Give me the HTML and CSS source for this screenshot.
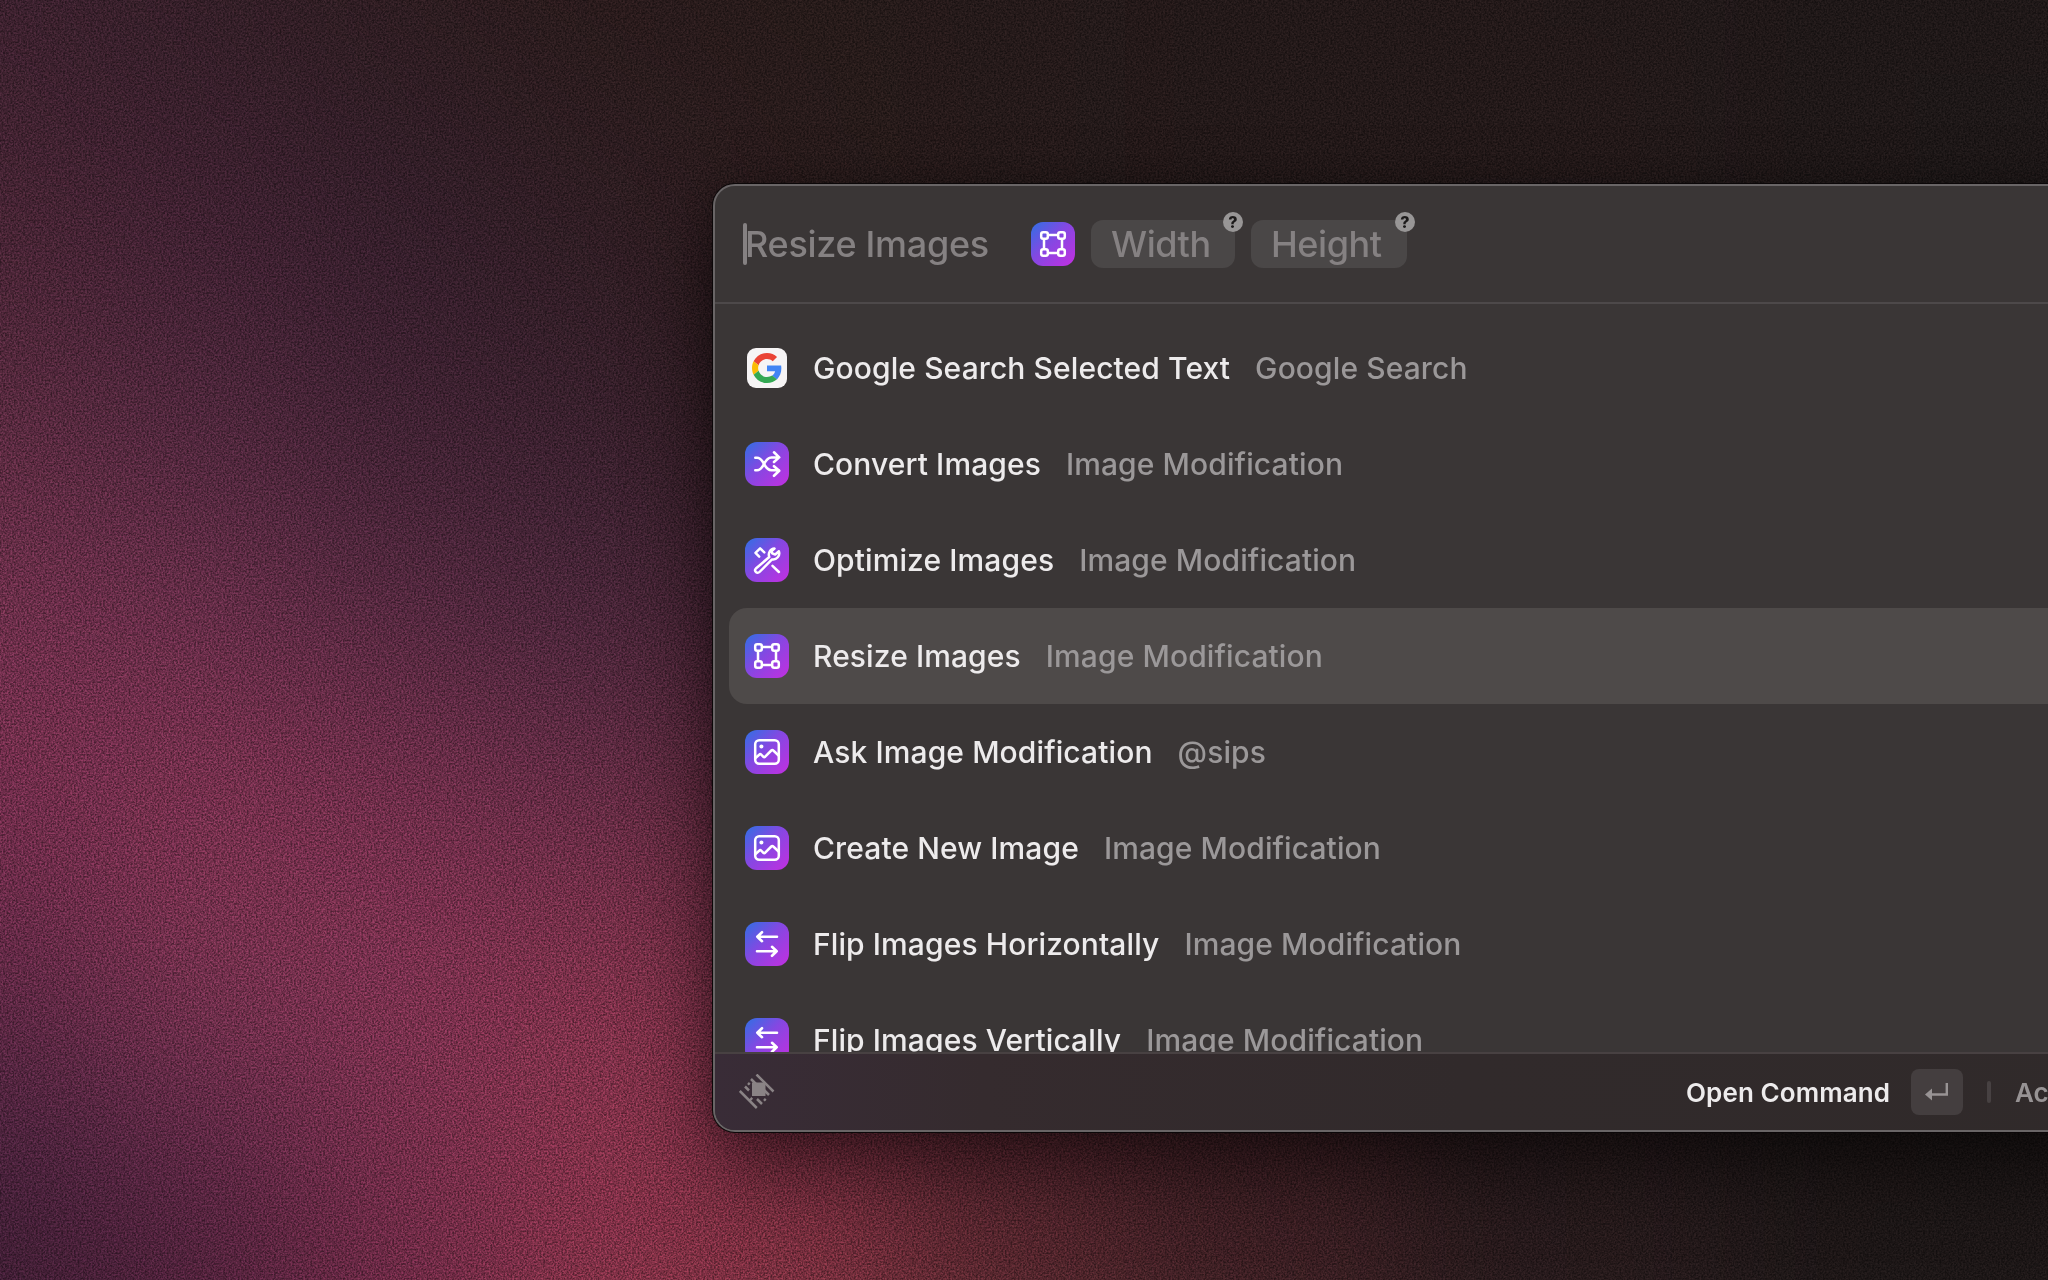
FILE: index.html
```html
<!DOCTYPE html>
<html lang="en">
<head>
<meta charset="utf-8">
<title>Command Launcher</title>
<link rel="stylesheet" href="styles.css">
</head>
<body>
<svg class="defs" width="0" height="0" aria-hidden="true">
  <defs>
    <symbol id="resize" viewBox="0 0 44 44"><g fill="none" stroke="#fff" stroke-width="2.5"><rect x="10.2" y="10.2" width="6.6" height="6.6" rx="2"/><rect x="27.2" y="10.2" width="6.6" height="6.6" rx="2"/><rect x="10.2" y="27.2" width="6.6" height="6.6" rx="2"/><rect x="27.2" y="27.2" width="6.6" height="6.6" rx="2"/><path d="M17 13h10M17 31h10M13 17v10M31 17v10"/></g></symbol>
    <symbol id="shuffle" viewBox="0 0 44 44"><path fill="none" stroke="#fff" stroke-width="2.6" stroke-linecap="round" stroke-linejoin="round" d="M10.300 15.800h1.700c7.500 0 6.500 12.500 14.500 12.500h7.500M10.300 28.300h1.700c7.500 0 6.500-12.800 14.500-12.800h7.500M29 10.300l5.200 5.100-5.200 4.600M29 24.200l5.200 4.600-5.200 5"/></symbol>
    <symbol id="tools" viewBox="0 0 44 44"><g fill="none" stroke="#fff" stroke-width="2.500" stroke-linecap="round" stroke-linejoin="round"><path d="M29.500 10.500a6.200 6.200 0 0 0-5.200 8.500L10.900 30.500a2.500 2.500 0 0 0 3.600 3.500L27 21.400a6.200 6.200 0 0 0 6.900-8.100l-3.700 3.200-3-1.200-.8-2.100z"/><path d="M14.200 18.600l-3.700-3.800 4.600-4.500 4.200 4M27.500 27.800l6.400 6.200"/></g></symbol>
    <symbol id="image" viewBox="0 0 44 44"><g fill="none" stroke="#fff" stroke-width="2.500" stroke-linecap="round" stroke-linejoin="round"><rect x="10.200" y="10.200" width="23.600" height="23.600" rx="4"/><path d="M10.500 28l3.700-3.300q1-1 2 0l2 2q1 .8 2 0l6.100-6.200q1-1 2 0l5.300 5"/></g><circle cx="16.400" cy="16.400" r="2" fill="#fff"/></symbol>
    <symbol id="swap" viewBox="0 0 44 44"><path fill="none" stroke="#fff" stroke-width="2.600" stroke-linecap="round" stroke-linejoin="round" d="M32 14.700H12.300M17 10.200l-4.700 4.500 4.700 4.500M12 29.300h19.700M27 24.800l4.700 4.500-4.700 4.500"/></symbol>
  </defs>
</svg>
<main class="desktop">
  <div class="wallpaper" aria-hidden="true"><i class="w1"></i><i class="w2"></i><i class="w3"></i><i class="w4"></i><i class="w5"></i><i class="w6"></i><i class="w7"></i><i class="w8"></i><i class="w9"></i></div>
  <section class="launcher">
    <header class="search">
      <span class="caret"></span><span class="query">Resize Images</span>
      <span class="tile"><svg><use href="#resize"/></svg></span>
      <span class="arg width">Width<b class="help">?</b></span>
      <span class="arg height">Height<b class="help">?</b></span>
    </header>
    <div class="results">
      <div class="row"><span class="slot"><span class="google"><svg viewBox="0 0 48 48"><path fill="#EA4335" d="M24 9.500c3.540 0 6.710 1.220 9.210 3.600l6.850-6.850C35.900 2.380 30.470 0 24 0 14.620 0 6.510 5.380 2.560 13.220l7.980 6.190C12.430 13.720 17.740 9.500 24 9.500z"/><path fill="#4285F4" d="M46.980 24.550c0-1.570-.15-3.090-.38-4.550H24v9.020h12.940c-.58 2.960-2.260 5.480-4.780 7.180l7.730 6c4.510-4.180 7.090-10.360 7.090-17.650z"/><path fill="#FBBC05" d="M10.530 28.590c-.48-1.450-.76-2.990-.76-4.590s.27-3.140.76-4.590l-7.980-6.190C.92 16.460 0 20.120 0 24s.92 7.540 2.560 10.780l7.970-6.190z"/><path fill="#34A853" d="M24 48c6.480 0 11.930-2.130 15.890-5.810l-7.730-6c-2.150 1.450-4.920 2.300-8.160 2.300-6.260 0-11.570-4.220-13.470-9.910l-7.980 6.190C6.510 42.620 14.620 48 24 48z"/></svg></span></span><span class="title">Google Search Selected Text</span><span class="sub">Google Search</span></div>
      <div class="row"><span class="tile"><svg><use href="#shuffle"/></svg></span><span class="title">Convert Images</span><span class="sub">Image Modification</span></div>
      <div class="row"><span class="tile"><svg><use href="#tools"/></svg></span><span class="title">Optimize Images</span><span class="sub">Image Modification</span></div>
      <div class="row selected"><span class="tile"><svg><use href="#resize"/></svg></span><span class="title">Resize Images</span><span class="sub">Image Modification</span></div>
      <div class="row"><span class="tile"><svg><use href="#image"/></svg></span><span class="title">Ask Image Modification</span><span class="sub">@sips</span></div>
      <div class="row"><span class="tile"><svg><use href="#image"/></svg></span><span class="title">Create New Image</span><span class="sub">Image Modification</span></div>
      <div class="row"><span class="tile"><svg><use href="#swap"/></svg></span><span class="title">Flip Images Horizontally</span><span class="sub">Image Modification</span></div>
      <div class="row"><span class="tile"><svg><use href="#swap"/></svg></span><span class="title">Flip Images Vertically</span><span class="sub">Image Modification</span></div>
    </div>
    <footer class="bar">
      <svg class="logo" viewBox="0 0 36 36"><path fill="#8a8385" d="M13 8.500h13.500v13.500H13z"/><path fill="none" stroke="#8a8385" stroke-width="2.500" d="M17.500.5l17 17M12 5l5 5M25 16l5 5M.8 17l17 17M6 12.500l4 4M18 25l5 5M9 9l1.700 1.700M11.500 24l1.700 1.700M25 25l1.700 1.700"/></svg>
      <span class="primary">Open Command</span>
      <span class="key"><svg viewBox="0 0 24 20"><path fill="none" stroke="#989394" stroke-width="2.400" d="M21.800 1v11.500H6"/><path fill="#989394" d="M0 12.500L7 6.500v12z"/></svg></span>
      <span class="divider"></span>
      <span class="actions">Actions</span>
    </footer>
  </section>
  <svg class="grain" aria-hidden="true"><filter id="noise" x="0" y="0" width="100%" height="100%" color-interpolation-filters="sRGB"><feTurbulence type="fractalNoise" baseFrequency="0.55" numOctaves="2" seed="4"/><feColorMatrix values="2 0 0 0 -.48  2 0 0 0 -.48  2 0 0 0 -.48  0 0 0 0 1"/></filter><rect width="100%" height="100%" filter="url(#noise)"/></svg>
</main>
</body>
</html>
```
FILE: styles.css
```css
* { box-sizing: border-box; }
body { margin: 0; font-family: Inter, "Liberation Sans", sans-serif; }
.defs { position: absolute; }
.desktop {
  position: relative;
  isolation: isolate;
  width: 2048px;
  height: 1280px;
  padding: 184px 0 0 713px;
  overflow: hidden;
  background: #1e1515;
}
/* Vertical colour strips, blurred together into the wallpaper */
.wallpaper {
  position: absolute;
  z-index: -2;
  inset: 0 -300px 0 -300px;
  display: grid;
  grid-template-columns: 400px 200px 200px 200px 200px 225px 275px 325px 1fr;
  filter: blur(75px);
}
.wallpaper i { margin: -200px 0; }
.w1 { background: linear-gradient(#3a202d 200px, #432231 400px, #54283c 600px, #6b2e49 800px, #702c4a 1000px, #5a2641 1200px, #45213a 1350px, #3c1c31 1480px); }
.w2 { background: linear-gradient(#321e26 200px, #3c1f2f 400px, #4a2539 600px, #622c46 800px, #772f4c 1000px, #70304b 1200px, #572541 1350px, #4c2038 1480px); }
.w3 { background: linear-gradient(#2c1c1f 200px, #321d29 400px, #3c2030 600px, #50273d 800px, #6f2d49 1000px, #7a304e 1200px, #702d48 1350px, #682742 1480px); }
.w4 { background: linear-gradient(#281a1a 200px, #2d1c21 400px, #351e2a 600px, #442437 800px, #632b44 1000px, #7d3048 1200px, #823149 1350px, #7e2f44 1480px); }
.w5 { background: linear-gradient(#261a19 200px, #291a1b 600px, #371e28 800px, #722e42 1200px, #772d3f 1350px, #772e3c 1480px); }
.w6 { background: linear-gradient(#241919 200px, #241919 600px, #50232d 1200px, #53252c 1480px); }
.w7 { background: linear-gradient(#221818 200px, #221818 600px, #371c21 1200px, #3b1e22 1480px); }
.w8 { background: linear-gradient(#211818, #26191b); }
.w9 { background: linear-gradient(#1e1717, #1c1616); }
.grain { position: absolute; z-index: -1; inset: 0; width: 100%; height: 100%; opacity: .34; mix-blend-mode: overlay; }
.launcher {
  position: relative;
  width: 1500px;
  height: 948px;
  display: flex;
  flex-direction: column;
  border: 2px solid #696566;
  border-radius: 22px;
  background: #3a3636;
  box-shadow: 0 0 0 1px #0b0708, 0 36px 80px rgba(0,0,0,.5), 0 0 30px rgba(0,0,0,.2);
  overflow: hidden;
}
.search {
  flex: 0 0 118px;
  display: flex;
  align-items: center;
  padding-left: 28px;
  border-bottom: 2px solid #4d494a;
  color: #858182;
  font-size: 36px;
  font-weight: 500;
  letter-spacing: -.3px;
}
.caret { width: 4px; height: 42px; border-radius: 2px; background: #858182; }
.query { width: 286px; margin-left: -2px; }
.tile {
  flex: none;
  width: 44px;
  height: 44px;
  border-radius: 12px;
  background: linear-gradient(135deg, #2f70e4, #8448e2 45%, #c32fe0);
}
.tile svg { display: block; width: 44px; height: 44px; }
.arg {
  position: relative;
  height: 48px;
  margin-left: 16px;
  padding-left: 20px;
  border-radius: 12px;
  background: #4a4747;
  letter-spacing: -.45px;
  line-height: 48px;
}
.arg.width { width: 144px; }
.arg.height { width: 156px; }
.help {
  position: absolute;
  top: -8px;
  right: -8px;
  width: 20px;
  height: 20px;
  border-radius: 50%;
  background: #989696;
  color: #1c1a1a;
  font-size: 16px;
  font-weight: 800;
  letter-spacing: 0;
  line-height: 20px;
  text-align: center;
}
.results { flex: 1; min-height: 0; overflow: hidden; padding: 16px 14px 0; }
.row {
  height: 96px;
  display: flex;
  align-items: center;
  padding-left: 16px;
  border-radius: 18px;
  font-size: 30px;
  font-weight: 500;
  letter-spacing: .1px;
  white-space: nowrap;
}
.selected { background: #4e4a49; }
.slot { display: flex; width: 44px; justify-content: center; }
.google { display: flex; width: 40px; height: 40px; align-items: center; justify-content: center; border-radius: 9px; background: #f6f4f5; }
.google svg { width: 30px; height: 30px; }
.title { margin-left: 24px; color: #edebec; }
.sub { margin-left: 25px; color: #9b9899; }
.bar {
  flex: 0 0 78px;
  display: flex;
  align-items: center;
  padding-left: 24px;
  border-top: 2px solid #484142;
  background: linear-gradient(90deg, #392c37, #352b2e 18%, #312a2b 50%, #302a2a);
  font-size: 26px;
  font-weight: 600;
  letter-spacing: .1px;
}
.logo { width: 36px; height: 36px; }
.primary { width: 225px; margin-left: 911px; color: #edebec; white-space: nowrap; }
.key { display: flex; width: 52px; height: 46px; align-items: center; justify-content: center; border-radius: 8px; background: #443e3f; }
.key svg { width: 24px; height: 20px; }
.divider { width: 4px; height: 22px; margin-left: 24px; border-radius: 2px; background: #474142; }
.actions { margin-left: 24px; color: #979394; }
```
